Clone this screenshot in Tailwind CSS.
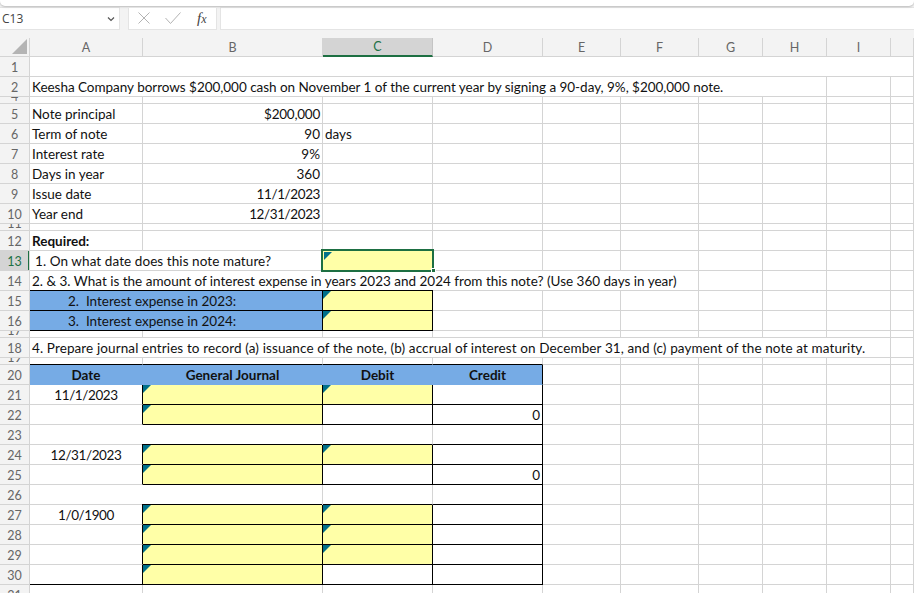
<!DOCTYPE html>
<html>
<head>
<meta charset="utf-8">
<script src="https://cdn.jsdelivr.net/npm/@tailwindcss/browser@4"></script>
</head>
<body class="bg-white w-[914px] h-[593px] overflow-hidden font-['Lato',sans-serif] text-[#1a1a1a]">
<div class="relative h-[593px] overflow-hidden">
  <header class="h-[38px] bg-[#f3f3f3] pt-[7px] relative">
    <div class="absolute top-0 left-0 right-0 h-[6px] bg-white rounded-b-[5px] shadow-[0_1px_2px_#bbb]"></div>
    <div class="flex h-[23px] gap-[8px]">
      <div class="w-[120px] bg-white border border-l-0 border-[#e4e4e4] flex items-center justify-between pl-[2px] pr-[4px]">
        <span class="text-[12px] text-[#444] font-['Open_Sans',sans-serif]">C13</span>
        <svg class="w-[8px] h-[6px]" viewBox="0 0 8 6" fill="none" stroke="#555" stroke-width="1.2"><path d="M1 1.5 L4 4.5 L7 1.5"/></svg>
      </div>
      <div class="w-[89px] bg-white border border-[#e4e4e4] relative flex items-center">
        <svg class="absolute left-[9px] top-[4px] w-[12px] h-[12px]" viewBox="0 0 12 12" fill="none" stroke="#b3b3b3" stroke-width="1"><path d="M0.5 0.5 L11.5 11.5 M11.5 0.5 L0.5 11.5"/></svg>
        <svg class="absolute left-[36px] top-[4px] w-[16px] h-[12px]" viewBox="0 0 16 12" fill="none" stroke="#b3b3b3" stroke-width="1"><path d="M0.5 6 L5.5 11.5 L15.5 0.5"/></svg>
        <span class="absolute left-[68px] top-[0px] text-[15px] leading-[20px] italic font-['Liberation_Serif',serif] text-[#444]">f<span class="text-[12px]">x</span></span>
      </div>
      <div class="flex-1 bg-white border border-r-0 border-[#e4e4e4] -ml-[5px]"></div>
    </div>
  </header>

  <table class="table-fixed w-[914px] border-separate border-spacing-0 text-[13.5px] leading-[18px] text-[#111] [&_td]:border-r [&_td]:border-b [&_td]:border-[#d4d4d4] [&_td]:pt-px [&_td]:overflow-hidden [&_td]:whitespace-nowrap [&_th]:border-r [&_th]:border-b [&_th]:border-[#d4d4d4] [&_th]:pt-px [&_th]:font-normal [&_th]:bg-[#f3f3f3] [&_th]:text-[#666] [&_th]:text-center [&_th]:text-[12.5px] [&_th]:leading-[17px] [&_th]:overflow-hidden [&_tr]:h-[20px]">
    <colgroup>
      <col class="w-[30px]"><col class="w-[113px]"><col class="w-[180px]"><col class="w-[110px]"><col class="w-[110px]"><col class="w-[78px]"><col class="w-[78px]"><col class="w-[64px]"><col class="w-[64px]"><col class="w-[64px]"><col class="w-[23px]">
    </colgroup>
    <tbody>
      <tr class="h-[19px]!">
        <th class="relative border-[#f3f3f3]! border-r-[#d4d4d4]! border-b-[#d4d4d4]!"><svg class="absolute right-[2px] bottom-[2px] w-[15px] h-[15px]" viewBox="0 0 15 15"><path d="M15 0 V15 H0 Z" fill="#b4b4b4"/></svg></th>
        <th>A</th><th>B</th><th class="bg-[#d4d4d4]! text-[#1d7044]! border-b-2! border-b-[#1d6f42]! border-r-[#c4c4c4]! leading-[16px]!">C</th><th>D</th><th>E</th><th>F</th><th>G</th><th>H</th><th>I</th><th></th>
      </tr>
      <tr><th>1</th><td colspan="10"></td></tr>
      <tr><th>2</th><td colspan="8" class="pl-[2px] tracking-[-0.03px]">Keesha Company borrows $200,000 cash on November 1 of the current year by signing a 90-day, 9%, $200,000 note.</td><td></td><td></td></tr>
      <tr class="h-[7px]!"><th class="pt-0!"><div class="h-[6px] overflow-hidden flex items-end justify-center leading-[12px]">4</div></th><td></td><td></td><td></td><td></td><td></td><td></td><td></td><td></td><td></td><td></td></tr>
      <tr><th>5</th><td class="pl-[2px]">Note principal</td><td class="text-right pr-[2px] tracking-[-0.25px]">$200,000</td><td></td><td></td><td></td><td></td><td></td><td></td><td></td><td></td></tr>
      <tr><th>6</th><td class="pl-[2px]">Term of note</td><td class="text-right pr-[2px]">90</td><td class="pl-[2px]">days</td><td></td><td></td><td></td><td></td><td></td><td></td><td></td></tr>
      <tr><th>7</th><td class="pl-[2px]">Interest rate</td><td class="text-right pr-[2px]">9%</td><td></td><td></td><td></td><td></td><td></td><td></td><td></td><td></td></tr>
      <tr><th>8</th><td class="pl-[2px]">Days in year</td><td class="text-right pr-[2px]">360</td><td></td><td></td><td></td><td></td><td></td><td></td><td></td><td></td></tr>
      <tr><th>9</th><td class="pl-[2px]">Issue date</td><td class="text-right pr-[2px] tracking-[-0.4px]">11/1/2023</td><td></td><td></td><td></td><td></td><td></td><td></td><td></td><td></td></tr>
      <tr><th>10</th><td class="pl-[2px]">Year end</td><td class="text-right pr-[2px] tracking-[-0.4px]">12/31/2023</td><td></td><td></td><td></td><td></td><td></td><td></td><td></td><td></td></tr>
      <tr class="h-[7px]!"><th class="pt-0!"><div class="h-[6px] overflow-hidden flex items-end justify-center leading-[12px]">11</div></th><td></td><td></td><td></td><td></td><td></td><td></td><td></td><td></td><td></td><td></td></tr>
      <tr><th>12</th><td class="pl-[2px] font-bold">Required:</td><td></td><td></td><td></td><td></td><td></td><td></td><td></td><td></td><td></td></tr>
      <tr><th class="relative bg-[#d4d4d4]! text-[#1d7044]!"><span class="absolute left-[28px] top-0 bottom-0 w-[2px] bg-[#1d6f42]"></span>13</th><td colspan="2" class="pl-[5px] tracking-[0.08px]">1. On what date does this note mature?</td><td class="relative bg-[#ffffa7]"><span class="absolute left-px top-px w-0 h-0 border-t-[8px] border-r-[8px] border-t-[#00708a] border-r-transparent"></span></td><td></td><td></td><td></td><td></td><td></td><td></td><td></td></tr>
      <tr><th>14</th><td colspan="6" class="pl-[2px]">2. &amp; 3. What is the amount of interest expense in years 2023 and 2024 from this note? (Use 360 days in year)</td><td></td><td></td><td></td><td></td></tr>
      <tr><th>15</th><td colspan="2" class="pl-[38px] bg-[#76abe5] border-r-black! border-b-black! shadow-[0_-1px_0_#000]">2.&nbsp; Interest expense in 2023:</td><td class="relative bg-[#ffffa7] border-r-black! border-b-black! shadow-[0_-1px_0_#000]"><span class="absolute left-0 top-0 w-0 h-0 border-t-[8px] border-r-[8px] border-t-[#00708a] border-r-transparent"></span></td><td></td><td></td><td></td><td></td><td></td><td></td><td></td></tr>
      <tr><th>16</th><td colspan="2" class="pl-[38px] bg-[#76abe5] border-r-black! border-b-black!">3.&nbsp; Interest expense in 2024:</td><td class="relative bg-[#ffffa7] border-r-black! border-b-black!"><span class="absolute left-0 top-0 w-0 h-0 border-t-[8px] border-r-[8px] border-t-[#00708a] border-r-transparent"></span></td><td></td><td></td><td></td><td></td><td></td><td></td><td></td></tr>
      <tr class="h-[7px]!"><th class="pt-0!"><div class="h-[6px] overflow-hidden flex items-end justify-center leading-[12px]">17</div></th><td></td><td></td><td></td><td></td><td></td><td></td><td></td><td></td><td></td><td></td></tr>
      <tr><th>18</th><td colspan="9" class="pl-[2px] tracking-[0.11px]">4. Prepare journal entries to record (a) issuance of the note, (b) accrual of interest on December 31, and (c) payment of the note at maturity.</td><td></td></tr>
      <tr class="h-[7px]!"><th class="pt-0!"><div class="h-[6px] overflow-hidden flex items-end justify-center leading-[12px]">19</div></th><td class="border-b-black!"></td><td class="border-b-black!"></td><td class="border-b-black!"></td><td class="border-b-black!"></td><td></td><td></td><td></td><td></td><td></td><td></td></tr>
      <tr><th>20</th><td class="bg-[#76abe5] border-r-[#76abe5]! border-b-[#76abe5]! text-center font-bold">Date</td><td class="bg-[#76abe5] border-r-[#76abe5]! border-b-[#76abe5]! text-center font-bold">General Journal</td><td class="bg-[#76abe5] border-r-[#76abe5]! border-b-[#76abe5]! text-center font-bold">Debit</td><td class="bg-[#76abe5] border-r-black! border-b-[#76abe5]! text-center font-bold">Credit</td><td></td><td></td><td></td><td></td><td></td><td></td></tr>
      <tr><th>21</th><td class="text-center border-r-black! tracking-[-0.4px]">11/1/2023</td><td class="relative bg-[#ffffa7] border-r-black! border-b-black!"><span class="absolute left-0 top-0 w-0 h-0 border-t-[8px] border-r-[8px] border-t-[#00708a] border-r-transparent"></span></td><td class="relative bg-[#ffffa7] border-r-black! border-b-black!"><span class="absolute left-0 top-0 w-0 h-0 border-t-[8px] border-r-[8px] border-t-[#00708a] border-r-transparent"></span></td><td class="border-r-black! border-b-black!"></td><td></td><td></td><td></td><td></td><td></td><td></td></tr>
      <tr><th>22</th><td class="border-r-black!"></td><td class="relative bg-[#ffffa7] border-r-black! border-b-black!"><span class="absolute left-0 top-0 w-0 h-0 border-t-[8px] border-r-[8px] border-t-[#00708a] border-r-transparent"></span></td><td class="border-r-black! border-b-black!"></td><td class="border-r-black! border-b-black! text-right pr-[2px]">0</td><td></td><td></td><td></td><td></td><td></td><td></td></tr>
      <tr><th>23</th><td colspan="2" class="border-b-0! pt-0!"><div class="flex h-[20px]"><div class="w-[112px] border-b border-[#d4d4d4]"></div><div class="flex-1 border-b border-black"></div></div></td><td class="border-b-black!"></td><td class="border-r-black! border-b-black!"></td><td></td><td></td><td></td><td></td><td></td><td></td></tr>
      <tr><th>24</th><td class="text-center border-r-black! tracking-[-0.4px]">12/31/2023</td><td class="relative bg-[#ffffa7] border-r-black! border-b-black!"><span class="absolute left-0 top-0 w-0 h-0 border-t-[8px] border-r-[8px] border-t-[#00708a] border-r-transparent"></span></td><td class="relative bg-[#ffffa7] border-r-black! border-b-black!"><span class="absolute left-0 top-0 w-0 h-0 border-t-[8px] border-r-[8px] border-t-[#00708a] border-r-transparent"></span></td><td class="border-r-black! border-b-black!"></td><td></td><td></td><td></td><td></td><td></td><td></td></tr>
      <tr><th>25</th><td class="border-r-black!"></td><td class="relative bg-[#ffffa7] border-r-black! border-b-black!"><span class="absolute left-0 top-0 w-0 h-0 border-t-[8px] border-r-[8px] border-t-[#00708a] border-r-transparent"></span></td><td class="border-r-black! border-b-black!"></td><td class="border-r-black! border-b-black! text-right pr-[2px]">0</td><td></td><td></td><td></td><td></td><td></td><td></td></tr>
      <tr><th>26</th><td colspan="2" class="border-b-0! pt-0!"><div class="flex h-[20px]"><div class="w-[112px] border-b border-[#d4d4d4]"></div><div class="flex-1 border-b border-black"></div></div></td><td class="border-b-black!"></td><td class="border-r-black! border-b-black!"></td><td></td><td></td><td></td><td></td><td></td><td></td></tr>
      <tr><th>27</th><td class="text-center border-r-black! tracking-[-0.4px]">1/0/1900</td><td class="relative bg-[#ffffa7] border-r-black! border-b-black!"><span class="absolute left-0 top-0 w-0 h-0 border-t-[8px] border-r-[8px] border-t-[#00708a] border-r-transparent"></span></td><td class="relative bg-[#ffffa7] border-r-black! border-b-black!"><span class="absolute left-0 top-0 w-0 h-0 border-t-[8px] border-r-[8px] border-t-[#00708a] border-r-transparent"></span></td><td class="border-r-black! border-b-black!"></td><td></td><td></td><td></td><td></td><td></td><td></td></tr>
      <tr><th>28</th><td class="border-r-black!"></td><td class="relative bg-[#ffffa7] border-r-black! border-b-black!"><span class="absolute left-0 top-0 w-0 h-0 border-t-[8px] border-r-[8px] border-t-[#00708a] border-r-transparent"></span></td><td class="relative bg-[#ffffa7] border-r-black! border-b-black!"><span class="absolute left-0 top-0 w-0 h-0 border-t-[8px] border-r-[8px] border-t-[#00708a] border-r-transparent"></span></td><td class="border-r-black! border-b-black!"></td><td></td><td></td><td></td><td></td><td></td><td></td></tr>
      <tr><th>29</th><td class="border-r-black!"></td><td class="relative bg-[#ffffa7] border-r-black! border-b-black!"><span class="absolute left-0 top-0 w-0 h-0 border-t-[8px] border-r-[8px] border-t-[#00708a] border-r-transparent"></span></td><td class="relative bg-[#ffffa7] border-r-black! border-b-black!"><span class="absolute left-0 top-0 w-0 h-0 border-t-[8px] border-r-[8px] border-t-[#00708a] border-r-transparent"></span></td><td class="border-r-black! border-b-black!"></td><td></td><td></td><td></td><td></td><td></td><td></td></tr>
      <tr><th>30</th><td class="border-r-black! border-b-black!"></td><td class="relative bg-[#ffffa7] border-r-black! border-b-black!"><span class="absolute left-0 top-0 w-0 h-0 border-t-[8px] border-r-[8px] border-t-[#00708a] border-r-transparent"></span></td><td class="border-r-black! border-b-black!"></td><td class="border-r-black! border-b-black!"></td><td></td><td></td><td></td><td></td><td></td><td></td></tr>
      <tr><th>31</th><td></td><td></td><td></td><td></td><td></td><td></td><td></td><td></td><td></td><td></td></tr>
    </tbody>
  </table>

  <div class="absolute left-[321px] top-[249px] w-[113px] h-[23px] border-2 border-[#1d6f42]"></div>
  <div class="absolute left-[431px] top-[268px] w-[5px] h-[5px] bg-[#1d6f42] border border-white"></div>
</div>
</body>
</html>
